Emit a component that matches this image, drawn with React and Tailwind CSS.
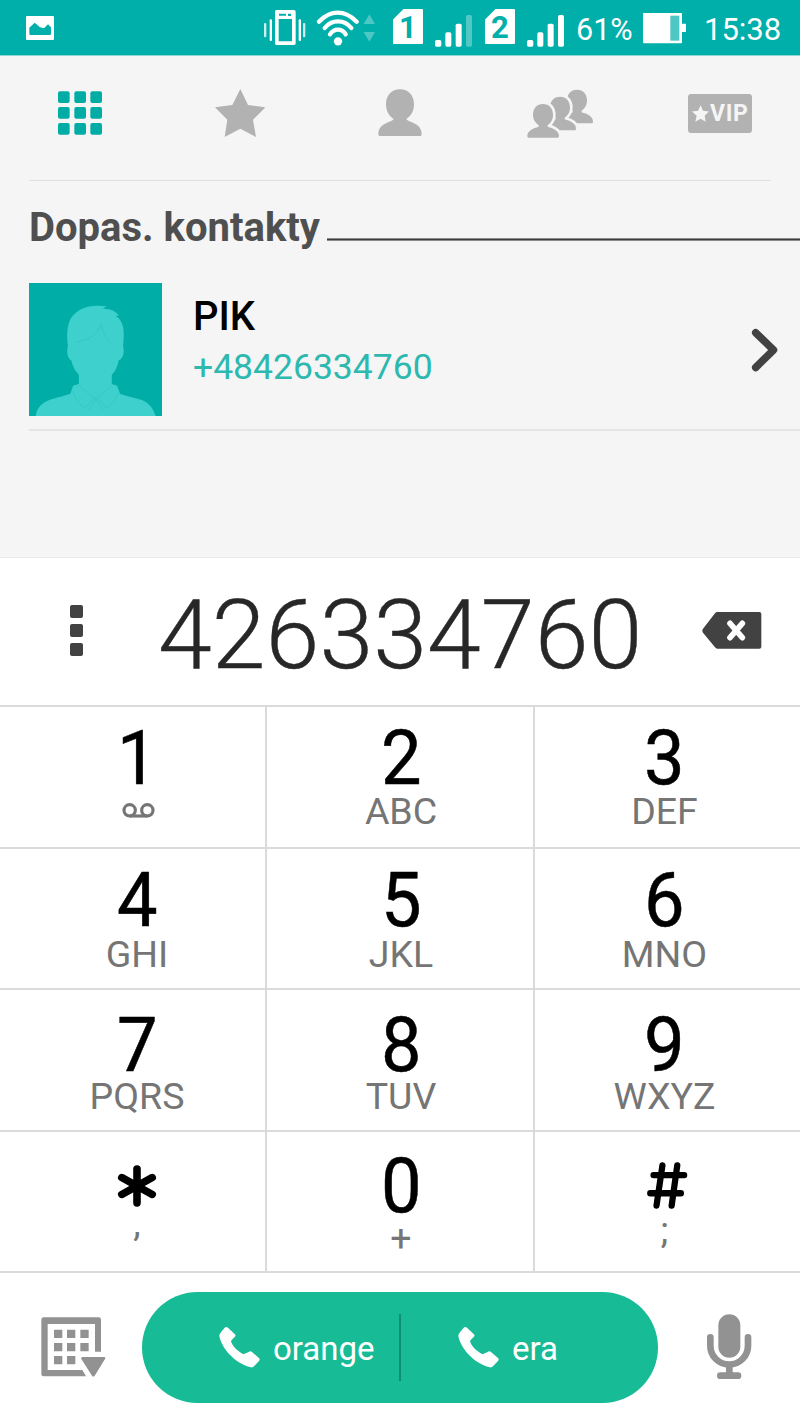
import React from 'react';
import { Asterisk } from 'lucide-react';

const VibrateIcon = () => (
  <svg className="w-[42px] h-[55px] ml-auto" viewBox="792 0 126 165" fill="#fff">
    <path fillRule="evenodd" d="M829 30h53q5 0 5 5v95q0 5-5 5h-53q-4 0-4-5V35q0-5 4-5zM836 57v67h40V57zM837 41v6h21v-6zM864 41v7h9v-7z" />
    <rect x="792" y="69" width="7" height="43" rx="3" opacity=".8" />
    <rect x="809" y="58" width="7" height="65" rx="3" />
    <rect x="896" y="58" width="7" height="65" rx="3" />
    <rect x="909" y="69" width="7" height="43" rx="3" opacity=".8" />
  </svg>
);

const WifiIcon = () => (
  <svg className="w-[60px] h-[55px] ml-[10px]" viewBox="948 0 180 165" fill="none" stroke="#fff" strokeWidth="13" strokeLinecap="round">
    <path d="M957 65Q983 38 1013 38T1070 65" />
    <path d="M974 84Q990 64 1014 64T1054 84" />
    <path d="M990 103Q999 89 1014 89T1037 103" />
    <circle cx="1014" cy="124" r="12.5" fill="#fff" stroke="none" />
    <path d="M1091 72l17-29 17 29zM1091 96h34l-17 29z" fill="#4dc7c3" stroke="none" />
  </svg>
);

const SimIcon = ({ slot }) => (
  <svg className="w-[30px] h-[55px]" viewBox="0 0 30 55">
    <path d="M10.5 9H29q1 0 1 1v33q0 1-1 1H1q-1 0-1-1V19.500z" fill="#fff" />
    <text x="15" y="38" textAnchor="middle" fill="#00aeaa" fontFamily="Roboto" fontWeight="700" fontSize="31">{slot}</text>
  </svg>
);

const SignalIcon = ({ weak }) => (
  <svg className="w-[38px] h-[55px]" viewBox="0 0 114 165" fill="#fff">
    <rect x="0" y="120" width="19" height="20" rx="5" />
    <rect x="31" y="97" width="18" height="43" rx="5" />
    <rect x="62" y="71" width="18" height="69" rx="5" />
    <rect x="93" y="45" width="18" height="95" rx="5" opacity={weak ? 0.32 : 1} />
  </svg>
);

const BatteryIcon = () => (
  <svg className="w-[44px] h-[55px]" viewBox="0 0 132 165">
    <path d="M3 39h111q3 0 3 3v29h10q2 0 2 2v21q0 2-2 2h-10v31q0 3-3 3H3q-3 0-3-3V42q0-3 3-3z" fill="#fff" />
    <rect x="82" y="47" width="27" height="75" fill="#4dc7c3" />
  </svg>
);

const StatusBar = () => (
  <div className="flex h-[56px] border-b border-[#8ed6d3] bg-[#00aeaa] pl-[26px] pr-[18px] text-white">
    <svg className="w-[28px] h-[55px]" viewBox="78 0 84 165">
      <path fillRule="evenodd" fill="#fff" d="M81 48h78q3 0 3 3v66q0 3-3 3H81q-3 0-3-3V51q0-3 3-3zM88 83v18q0 4 4 4h57q4 0 4-4V82l-9-9-12 12-12-3-16-14-16 15z" />
    </svg>
    <VibrateIcon />
    <WifiIcon />
    <div className="ml-[17px] flex"><SimIcon slot="1" /></div>
    <div className="ml-[12px] flex"><SignalIcon weak /></div>
    <div className="ml-[12px] flex"><SimIcon slot="2" /></div>
    <div className="ml-[12px] flex"><SignalIcon /></div>
    <span className="ml-[11px] w-[59px] whitespace-nowrap text-[30.5px] leading-[59px]">61%</span>
    <div className="ml-[8px] flex"><BatteryIcon /></div>
    <span className="ml-[17px] w-[78px] whitespace-nowrap text-[31px] leading-[59px]">15:38</span>
  </div>
);

const Tabs = () => (
  <div className="grid h-[124px] grid-cols-5 justify-items-center text-[#b2b2b2]">
    <svg className="mt-[35px] h-[44px] w-[44px]" viewBox="0 0 132 132" fill="#00aca4">
      {[1, 48, 96].map((y) => [0, 49, 97].map((x) => (
        <rect key={`${x}-${y}`} x={x} y={y} width="35" height="35" rx="6" />
      )))}
    </svg>
    <svg className="mt-[33px] h-[49px] w-[50px]" viewBox="644 267 150 147" fill="currentColor">
      <path d="M720 267l23 48 52 7-37 37 9 52-47-25-47 25 8-52-37-37 52-7z" />
    </svg>
    <svg className="mt-[33px] h-[49px] w-[44px]" viewBox="0 0 132 147" fill="currentColor">
      <path d="M66 1c26 0 42 19 42 45 0 20-9 35-23 44 4 6 10 7 20 11 17 7 26 18 26 35q0 5-4 5H5q-4 0-4-5c0-17 9-28 26-35 10-4 16-5 20-11-14-9-23-24-23-44C24 20 40 1 66 1z" />
    </svg>
    <svg className="mt-[33px] h-[50px] w-[66px]" viewBox="381 267 198 150" fill="currentColor" stroke="#f5f5f5">
      {/* back to front so each outline cuts the head behind it */}
      {[[102, -43], [51, -22], [0, 0]].map(([x, y]) => (
        <path
          key={x}
          transform={`translate(${x} ${y})`}
          strokeWidth="16"
          paintOrder="stroke"
          d="M429 312c19 0 30 14 30 32 0 15-6 24-16 31v5c16 5 34 11 34 29q0 4-4 4h-87q-4 0-4-4c0-18 18-24 34-29v-5c-10-7-17-16-17-31 0-18 11-32 30-32z"
        />
      ))}
    </svg>
    <div className="mt-[38px] flex h-[39px] w-[64px] items-center rounded-[3px] bg-[#b2b2b2] pl-[4px] text-[#f5f5f5]">
      <svg className="h-[17px] w-[17px] shrink-0" viewBox="875 317 51 50" fill="currentColor">
        <path d="M901 317l7 17 18 2-13 13 3 18-15-9-16 9 4-18-14-13 18-2z" />
      </svg>
      <span className="ml-[1px] text-[23px] font-bold leading-[39px] tracking-[0.6px]">VIP</span>
    </div>
  </div>
);

const Avatar = () => (
  <svg className="h-[133px] w-[133px]" viewBox="87 339 400 400">
    <path d="M87 339h400v400H87z" fill="#00ada7" />
    <path
      fill="#3dd0cc"
      d="M107 739C112 712 126 700 148 691C172 682 195 679 211 672L220 647L237 643V615C225 604 218 588 214 571C203 566 199 546 204 529C200 500 201 476 208 456C222 420 262 401 320 409L308 417C330 415 350 424 357 438L346 437C366 448 373 470 372 500L370 529C375 546 370 567 357 571C353 590 347 604 336 615V643L352 648L361 672C380 680 405 684 428 692C450 702 460 717 468 739z"
    />
    <g fill="none" stroke="#34c8c4" strokeWidth="3">
      <path d="M230 517Q292 508 303 462Q312 504 336 520" />
      <path d="M237 647L287 690L336 647M219 665Q232 700 254 715L287 682L322 716Q348 695 357 668" />
      <path d="M287 690L266 720M287 690L310 720" />
    </g>
  </svg>
);

const Matches = () => (
  <div className="h-[378px] border-b border-[#e9e9e9]">
    <div className="ml-[29px] mr-[29px] h-px bg-[#e0e0e0]" />
    <div className="flex h-[60px] pl-[29px]">
      <h2 className="mt-[23px] w-[298px] whitespace-nowrap text-[40px] font-bold leading-[48px] text-[#4f4f4f]">Dopas. kontakty</h2>
      <div className="mt-[57px] h-[3px] flex-1 border-y border-[#8a8a8a] bg-[#3c3c3c]" />
    </div>
    <div className="ml-[29px] mt-[42px] flex h-[148px] border-b-2 border-[#e5e5e5]">
      <Avatar />
      <div className="ml-[31px] mt-[10px]">
        <div className="text-[40px] font-medium leading-[48px] text-black">PIK</div>
        <div className="mt-[4px] text-[35.5px] leading-[44px] text-[#2db8b0]">+48426334760</div>
      </div>
      <svg className="ml-auto mr-[22px] mt-[45px] h-[44px] w-[27px]" viewBox="0 0 27 44" fill="none" stroke="#424242" strokeWidth="7.500" strokeLinecap="round" strokeLinejoin="round">
        <path d="M4.700 4.700L22.500 22 4.700 39.500" />
      </svg>
    </div>
  </div>
);

const NumberRow = () => (
  <div className="flex h-[147px] bg-white">
    <div className="ml-[70px] mt-[47px] flex w-[13px] flex-col gap-[6px]">
      <div className="h-[13px] w-[13px] rounded-[2px] bg-[#424242]" />
      <div className="h-[13px] w-[13px] rounded-[2px] bg-[#424242]" />
      <div className="h-[13px] w-[13px] rounded-[2px] bg-[#424242]" />
    </div>
    <div className="ml-[75px] mt-[20px] w-[486px] whitespace-nowrap text-[97px] font-light leading-[114px] text-[#272727] [-webkit-text-stroke:0.4px_#272727]">426334760</div>
    <svg className="ml-[58px] mt-[54px] h-[37px] w-[60px]" viewBox="0 0 180 111">
      <path d="M46 0H172q6 0 6 6v98q0 6-6 6H46q-4 0-7-4L3 62q-4-6 0-12L39 4q3-4 7-4z" fill="#424242" />
      <path d="M84 34l37 43M121 34L84 77" stroke="#fff" strokeWidth="17" strokeLinecap="round" />
    </svg>
  </div>
);

const Voicemail = () => (
  <svg className="ml-[2px] mt-[8px] h-[15px] w-[33px]" viewBox="0 0 99 45" fill="none" stroke="#757575" strokeWidth="9.500">
    <circle cx="23" cy="22" r="17" />
    <circle cx="76" cy="22" r="17" />
    <path d="M23 39h53" />
  </svg>
);

const StarKey = () => <Asterisk className="h-[68px] w-[74px]" preserveAspectRatio="none" strokeWidth={2.6} />;

const HashKey = () => (
  <svg className="mb-[2px] ml-[5px] h-[47px] w-[43px]" viewBox="738 122 124 140" preserveAspectRatio="none" fill="none" stroke="#000" strokeWidth="19" strokeLinecap="round">
    <path d="M758 161h93M748 215h93M785 132l-18 120M830 132l-17 120" />
  </svg>
);

const keys = [
  ['1', <Voicemail />], ['2', 'ABC'], ['3', 'DEF'],
  ['4', 'GHI'], ['5', 'JKL'], ['6', 'MNO'],
  ['7', 'PQRS'], ['8', 'TUV'], ['9', 'WXYZ'],
  [<StarKey />, ','], ['0', '+'], [<HashKey />, ';'],
];

const columns = [
  'pl-[9px] border-r-2',
  'pl-[2px] border-r-2',
  'pr-[6px]',
];

const rows = [
  'pt-[19px] gap-[5px]',
  'pt-[19px] gap-[6px]',
  'pt-[23px] gap-[3px]',
  'pt-[22px] gap-[4px]',
];

// punctuation sits low on the line, so it gets a tighter line box
const subLeading = (sub) => {
  if (sub === ',') return 'leading-[2px]';
  if (sub === ';') return 'leading-[16px]';
  return 'leading-[32px]';
};

const Keypad = () => (
  <div className="grid grid-cols-[267px_268px_265px] grid-rows-[142px_141px_142px_141px] border-b-2 border-[#dadada] bg-white">
    {keys.map(([main, sub], i) => (
      <div key={i} className={`flex flex-col items-center border-t-2 border-[#dadada] ${rows[Math.floor(i / 3)]} ${columns[i % 3]}`}>
        <div className="flex h-[64px] scale-x-95 items-center text-[76px] leading-[64px] text-black [-webkit-text-stroke:0.5px_black]">{main}</div>
        <div className={`h-[32px] text-[37.5px] text-[#757575] ${subLeading(sub)}`}>{sub}</div>
      </div>
    ))}
  </div>
);

const CallIcon = () => (
  <svg className="h-[41px] w-[41px]" viewBox="658 622 123 123" fill="#fff">
    <path d="M675 624q5-4 10 0l20 19q5 5 0 9l-9 9q-3 3-1 7C702 684 716 696 730 703q3 1 5-1l12-5q5-4 10 0l21 18q4 4 0 9l-15 16q-4 4-9 3C702 731 664 681 659 649q0-5 3-9z" />
  </svg>
);

const BottomBar = () => (
  <div className="flex h-[149px] bg-white pt-[19px]">
    <svg className="ml-[41px] mt-[25px] h-[60px] w-[65px]" viewBox="123 590 195 180" fill="#929292">
      <path d="M131 591h165q7 0 7 7v96h-18V611H143v138h104l11 19H131q-7 0-7-7V598q0-7 7-7z" />
      <path d="M162 628h25v25h-25zM201 628h25v25h-25zM241 628h25v25h-25zM162 668h25v25h-25zM201 668h25v25h-25zM241 668h25v25h-25zM162 707h25v25h-25zM201 707h25v25h-25z" />
      <path d="M248 710h64q6 0 3 6l-31 50q-4 5-8 0l-32-50q-2-6 4-6z" />
    </svg>
    <div className="ml-[36px] flex h-[111px] w-[516px] rounded-full bg-[#17bb95] text-[33px] leading-[48px] text-white">
      <div className="flex w-[257px] items-center pl-[77px]">
        <CallIcon />
        <span className="ml-[13px] pt-[2px]">orange</span>
      </div>
      <div className="mt-[22px] h-[67px] w-[2px] bg-[#0e8f72]" />
      <div className="flex flex-1 items-center pl-[57px]">
        <CallIcon />
        <span className="ml-[13px] pt-[2px]">era</span>
      </div>
    </div>
    <svg className="ml-[49px] mt-[22px] h-[66px] w-[45px]" viewBox="921 582 135 198" fill="none" stroke="#929292" strokeLinecap="round">
      <rect x="955" y="583" width="66" height="130" rx="33" fill="#929292" stroke="none" />
      <path d="M931 652v25a56 56 0 0 0 113 0v-25" strokeWidth="20" />
      <path d="M988 735v28M961 767h53" strokeWidth="20" />
    </svg>
  </div>
);

export default function App() {
  return (
    <div className="h-[1422px] w-[800px] overflow-hidden bg-[#f5f5f5] font-[Roboto,sans-serif]">
      <StatusBar />
      <Tabs />
      <Matches />
      <NumberRow />
      <Keypad />
      <BottomBar />
    </div>
  );
}
